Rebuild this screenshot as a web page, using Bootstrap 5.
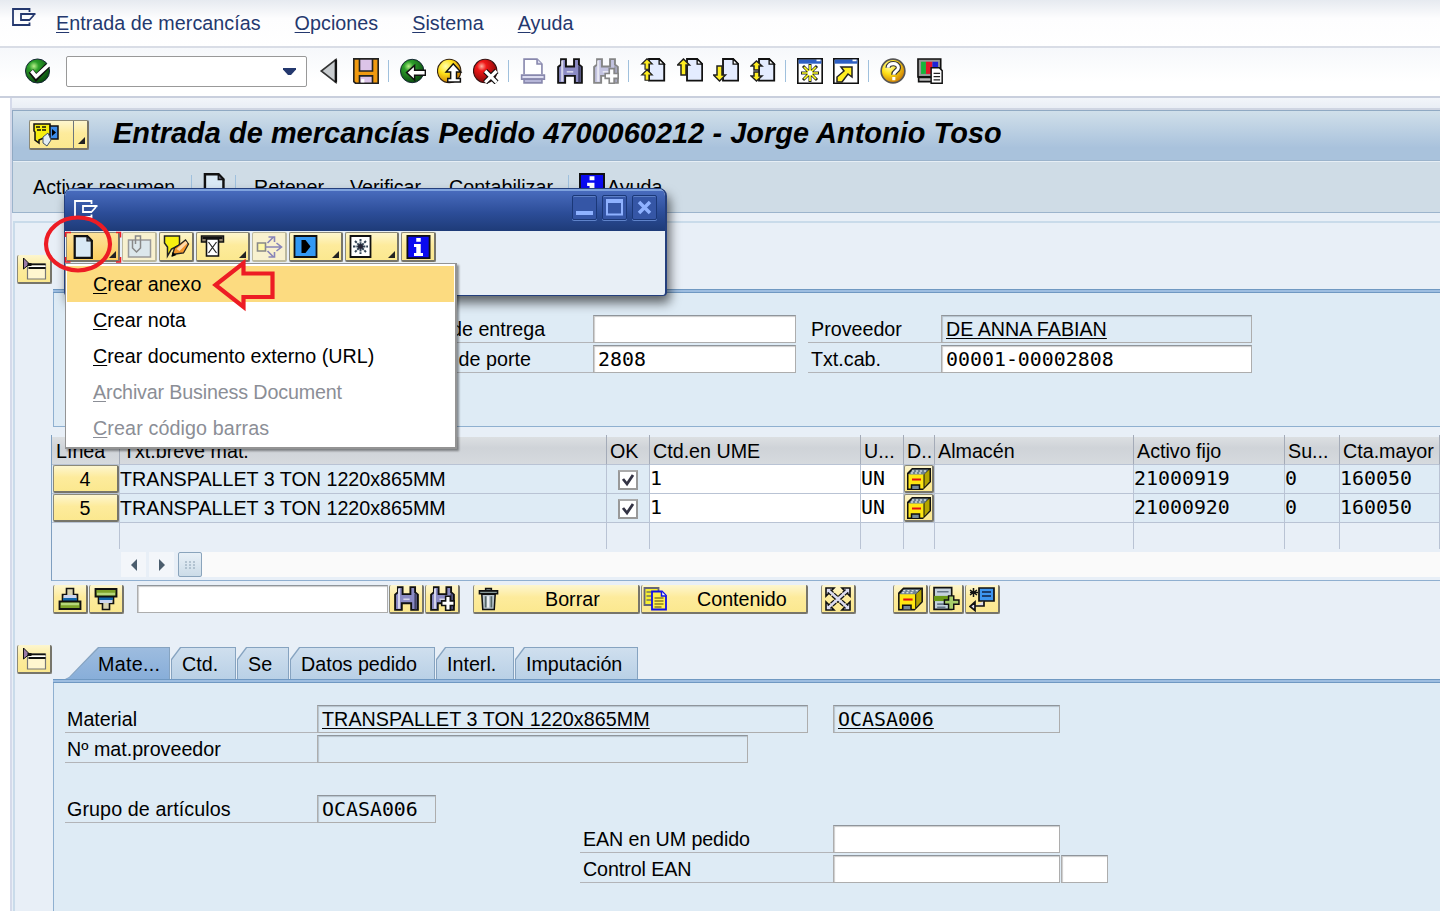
<!DOCTYPE html>
<html lang="es">
<head>
<meta charset="utf-8">
<title>Entrada de mercancías</title>
<meta name="viewport" content="width=device-width, initial-scale=1">
<link href="https://cdn.jsdelivr.net/npm/bootstrap@5.3.0/dist/css/bootstrap.min.css" rel="stylesheet">
<style>
body{font-family:"Liberation Sans",Arial,sans-serif;font-size:19.7px;line-height:28px;color:#000;background:#fff;width:1440px;height:911px;overflow:hidden;white-space:nowrap}
svg{display:block;flex:none}
.mono{font-family:"DejaVu Sans Mono","Liberation Mono",monospace;font-size:19.9px}
u{text-underline-offset:2px;text-decoration-thickness:1px;text-decoration-skip-ink:none}
/* menu and system toolbar */
.menubar{height:48px;padding:0 0 2px 12px;color:#24386e;background:linear-gradient(#e6eaf0,#fdfdfe 40%,#fff);border-bottom:2px solid #d9dde6}
.menubar svg{margin:8px 20px 0 0}
.menubar .nav{gap:34px;padding-top:9px;letter-spacing:.05px}
.systools{height:50px;padding:10px 0 0 25px;background:linear-gradient(#f6f8fb,#fff 70%);border-bottom:2px solid #c9cfdd}
.systools .cmd{width:241px;height:31px;margin:-2px 11px 0 15px;border:1px solid #999;border-radius:2px;background:#fff;padding:11px 10px}
.grp{gap:10.5px}
.tsep{width:1px;height:22px;background:#9fc0dd;margin:2px 11px 0 9px;flex:none}
/* work area */
.work{margin-left:10px;border-left:2px solid #d5daea;height:813px;background:#e8eff7}
.strip{height:12px;background:linear-gradient(#f2f5fa,#e9eef5);border-bottom:2px solid #cfd5e2}
.titleband{height:50px;border-top:1px solid #90a9c3;border-left:1px solid #90a9c3;background:linear-gradient(#d0dfea,#a9c2dc 75%,#a9c2dc);padding:9px 0 0 16px}
.titleband h1{font-size:28.9px;font-weight:700;font-style:italic;margin:-1px 0 0 24px;line-height:28px;letter-spacing:.05px}
.apptools{height:53px;background:#cfdce6;border:1px solid #9cb4cc;border-width:1px 0 1px 1px;border-top-color:#9cb4cc;box-shadow:inset 0 1px #e6eef5;padding:12px 0 0 20px}
.apptools .tsep{margin:2px 0 0}
.outer{margin:8px 0 0 1px;border:2px solid #c9dbea;border-width:2px 0 0 2px;height:700px}
.side{width:39px;padding-left:2px;flex:none}
.ybtn{background:linear-gradient(#fdf6cf,#fdeb9c 45%,#fbe88f);border:1px solid #8d8a78;border-right:2px solid #77756a;border-bottom:2px solid #77756a;border-radius:2px;flex:none;display:flex;align-items:center;justify-content:center;color:#000}
.ybtn.notop{border-top:0}
.arrowcorner{width:7px;height:7px;background:#222;clip-path:polygon(100% 0,100% 100%,0 100%)}
.pane{border-left:1px solid #8fb0d0;background:#deebf5}
.paneline{height:4px;background:#9dbde0;border-top:1px solid #6f98c2;border-bottom:1px solid #6f98c2}
.fld{height:28px;border:1px solid #adadad;border-top-color:#8f959b;background:#fff;line-height:27px;padding-left:4px;flex:none;box-shadow:inset 1px 1px 1px #ccc}
.fld.ro{background:#deebf5;border-color:#8f959b #adadad #adadad;box-shadow:inset 1px 1px 1px #b5c2cc}
.lbl{height:28px;border-bottom:1px solid #b2b4b8;padding-left:2px;flex:none}
/* item table */
.grid{border-left:1px solid #7f9fc0;border-bottom:1px solid #8fafd0;height:146px}
.grid table{table-layout:fixed;width:1388px;border-collapse:separate;border-spacing:0}
.grid th,.grid td{font-weight:400;padding:0;height:29px;border-right:1px solid #b9c3d4;border-bottom:1px solid #b9c3d4;overflow:hidden;line-height:28px}
.grid th{height:30px;background:linear-gradient(#e8eff7 2px,#dcdfe2 2px,#cfd3d8 45%,#d6dade);padding:3px 0 0 3px;line-height:26px;border-right-color:#a4abb8}
.grid th:first-child{padding-left:4px}
.grid tr.blank td{height:26px;border-bottom:0}
.t{background:#deebf5}.w{background:#fff}
.numb{width:66px;height:28px;margin-left:1px;padding-right:1px}
.chk{width:20px;height:20px;border:2px solid #999;border-top-color:#aaa;background:#fff;margin:1px auto 0 11px}
.sb{width:25px;height:25px;background:#f3f6fa;display:flex;align-items:center;justify-content:center}
.thumb{width:24px;height:25px;border:1px solid #8aa4bc;border-radius:2px;background:linear-gradient(#e8f0f7,#ccdce8)}
/* detail tabs */
.stab{height:32px;position:relative;background:#86a3c0;clip-path:polygon(0 12px,9px 0,100% 0,100% 100%,0 100%);padding:3px 0 0 11px;z-index:0;margin-right:1px}
.stab::before{content:"";position:absolute;z-index:-1;inset:1px 1px 0;background:linear-gradient(#cfdfee,#b9d0e6);clip-path:polygon(0 12px,9px 0,100% 0,100% 100%,0 100%)}
.stab.on,.stab.on::before{clip-path:polygon(0 100%,4px 94%,29px 4px,33px 0,100% 0,100% 100%)}
.stab.on::before{background:linear-gradient(#9dbcdf,#88aed9)}
/* floating dialog, menu and hand-drawn marks */
.dlg{position:absolute;left:64px;top:188px;width:603px;height:108px;background:#e8eff6;border:1px solid #243f7d;border-right-width:2px;border-radius:8px 8px 4px 4px;box-shadow:3px 7px 11px rgba(0,0,0,.58);overflow:hidden}
.dtitle{height:42px;border-top:2px solid #7ea2dd;background:linear-gradient(#486bbd,#2c4d98 55%,#1e3b78);padding:4px 8px 0 9px}
.dtitle svg.win{margin-top:5px}
.wb{width:25px;height:25px;border:1px solid #1b3878;border-radius:2px;background:#3556a6;box-shadow:0 1px #5f83ca,inset 0 1px #5d7fc6;display:flex;align-items:center;justify-content:center;margin-left:5px}
.dbtns{padding:1px 0 0 1px;gap:2px}
.dbtns .ybtn{height:30px}
.dbtns .ybtn.off{background:#f8f1cf;border-color:#bcb99f}
.drop{justify-content:space-between;align-items:center;width:54px;padding:0 2px 0 3px}
.drop .arrowcorner{align-self:flex-end;margin-bottom:2px}
.menu{position:absolute;left:65px;top:263px;width:392px;height:186px;background:#fff;border:1px solid #949494;border-right-width:2px;border-bottom-width:2px;padding:2px 1px;box-shadow:2px 2px 2px rgba(0,0,0,.4)}
.menu div{height:36px;line-height:36px;padding-left:26px}
.menu .off{color:#8b8e96}
.menu .hot{background:#fcdb80}
.marks{position:absolute;left:40px;top:210px}
</style>
</head>
<body>
<svg width="0" height="0" class="position-absolute">
<defs>
<radialGradient id="gg" cx=".35" cy=".3" r=".8"><stop offset="0" stop-color="#b9f08a"/><stop offset=".25" stop-color="#2da02a"/><stop offset="1" stop-color="#053d0a"/></radialGradient>
<radialGradient id="gy" cx=".35" cy=".3" r=".8"><stop offset="0" stop-color="#ffffb0"/><stop offset=".4" stop-color="#ffe11a"/><stop offset="1" stop-color="#c46a00"/></radialGradient>
<radialGradient id="gr" cx=".35" cy=".3" r=".8"><stop offset="0" stop-color="#ffb0a0"/><stop offset=".25" stop-color="#f01818"/><stop offset="1" stop-color="#6d0505"/></radialGradient>
<symbol id="win" viewBox="0 0 24 18"><path d="M17.5 4V1H1V17H17.5V14.500M23.500 6H9V12H17M22 7l-5 5.500" fill="none" stroke="currentColor" stroke-width="1.800"/></symbol>
<symbol id="ok" viewBox="0 0 16 16"><circle cx="7.7" cy="8" r="7.4" fill="url(#gg)" stroke="#123" stroke-width=".6"/><path d="M3.6 8l3.2 4L14 4.6" fill="none" stroke="#111" stroke-width="3.6"/><path d="M4 8l2.8 3.400L14.800 4" fill="none" stroke="#fff" stroke-width="2.200"/></symbol>
<symbol id="back" viewBox="0 0 16 16"><path d="M11 1v14L2 8z" fill="#c8cccf" stroke="#333" stroke-width="1"/><path d="M11 1v14" stroke="#111" stroke-width="1.5"/></symbol>
<symbol id="save" viewBox="0 0 16 16"><path d="M.5.5h15v15h-14l-1-1z" fill="#f09a10" stroke="#222"/><path d="M4 .5h8V8H4zM4 11h8v4.5H4z" fill="#dcc4e8" stroke="#222"/><path d="M5 13h2v2H5z" fill="#fff"/></symbol>
<symbol id="bk" viewBox="0 0 16 16"><circle cx="7.5" cy="8" r="7.2" fill="url(#gg)" stroke="#123" stroke-width=".6"/><path d="M4 9l5-4.400v3h6.600v3H9v3z" fill="#fff" stroke="#111" stroke-width=".9"/></symbol>
<symbol id="up" viewBox="0 0 16 16"><circle cx="7.5" cy="8" r="7.2" fill="url(#gy)" stroke="#321" stroke-width=".7"/><path d="M10 3.6l4.600 5H12v4h2.400v2.200H6.600v-2.200H8.400v-4H5.600z" fill="#fff" stroke="#111" stroke-width=".9"/></symbol>
<symbol id="no" viewBox="0 0 16 16"><circle cx="7.5" cy="8" r="7.2" fill="url(#gr)" stroke="#311" stroke-width=".7"/><path d="M7.500 8l7 7M14.500 8l-7 7" stroke="#111" stroke-width="3.400"/><path d="M7.500 8l7 7M14.500 8l-7 7" stroke="#fff" stroke-width="2"/></symbol>
<symbol id="print" viewBox="0 0 16 16"><path d="M2.500 10V.7h8l3 3V10" fill="#fff" stroke="#8888ad"/><path d="M10.500.7v3h3M1 10.500h14v2.500H1z" fill="#ddddf0" stroke="#8888ad"/><path d="M2.500 13h11v2.300h-11z" fill="#b6b6d8" stroke="#8888ad"/></symbol>
<symbol id="bin" viewBox="0 0 16 16"><path d="M2.500.7h3v4.500h5V.7h3V4l1.800 1.500v9.800h-4.300V11h-6v4.300H.7V5.500L2.500 4z" fill="#8b8bc4" stroke="#111" stroke-width="1.200"/><path d="M3.200 1.500v13" stroke="#d5d5ea" stroke-width="1.300"/><path d="M13.800 5v10" stroke="#444468" stroke-width="1.500"/><path d="M6 8.500h4" stroke="#d5d5ea" stroke-width="1"/></symbol>
<symbol id="plus" viewBox="0 0 16 16"><path d="M10 6.500h3v3h2.500v3H13v3h-3v-3H7.500v-3H10z" fill="#fff" stroke="#111" stroke-width="1"/></symbol>
<symbol id="page" viewBox="0 0 16 16"><path d="M.6.6h6l3 3v9.800h-9z" fill="#e4ecff" stroke="#111" stroke-width="1.100"/><path d="M6.600.6v3h3z" fill="#fff" stroke="#111" stroke-width=".8"/></symbol>
<symbol id="ya" viewBox="0 0 8 8"><path d="M4 .5L7.500 4H5.300v3.500H2.700V4H.5z" fill="#ffee22" stroke="#222" stroke-width=".8"/></symbol>
<symbol id="nw" viewBox="0 0 16 16"><path d="M.5.5h15v15H.5z" fill="#fff" stroke="#111"/><path d="M1 1h14v2.500H1z" fill="#2d5fc4"/><path d="M12 1.500h2.500" stroke="#fff"/></symbol>
<symbol id="help" viewBox="0 0 16 16"><circle cx="8" cy="8" r="7.300" fill="url(#gy)" stroke="#555" stroke-width="1"/><path d="M5 6C5 2.500 11.500 2.700 11.300 6 11.200 8 8.500 8 8.500 10.300" fill="none" stroke="#333" stroke-width="3.300"/><path d="M5 6C5 2.500 11.500 2.700 11.300 6 11.200 8 8.500 8 8.500 10.300M8.500 11.700v2" fill="none" stroke="#fff" stroke-width="1.900"/></symbol>
<symbol id="mon" viewBox="0 0 16 16"><path d="M.6.6h14v11H.6z" fill="#999" stroke="#111"/><path d="M2.500 2.300h3v7.500h-3z" fill="#15b53a"/><path d="M5.500 2.300h4v7.500h-4z" fill="#e4142a"/><path d="M9.500 2.300h3.500v7.500H9.500z" fill="#1c22d8"/><path d="M1 12h10v2.500H1z" fill="#bbb" stroke="#111"/><path d="M8.700 6h5l1.800 1.800v7.700H8.700z" fill="#fff" stroke="#111" stroke-width=".9"/><path d="M10.200 9.500h4M10.200 11.500h4M10.200 13.500h4" stroke="#222" stroke-width=".8"/></symbol>
<symbol id="doc" viewBox="0 0 16 16"><path d="M1.800.8h8.400l3 3v11.400H1.800z" fill="#d9e9f5" stroke="#111" stroke-width="1.500"/><path d="M10 .8v3.200h3.200z" fill="#667" stroke="#111" stroke-width=".8"/></symbol>
<symbol id="info" viewBox="0 0 16 16"><path d="M.6.600h14.800v14.800H.6z" fill="#0a0af0" stroke="#111" stroke-width="1.200"/><path d="M6.500 2h3v2.500h-3zM5 6h4.500v6H11v2H5v-2h1.500V8H5z" fill="#fff"/></symbol>
<symbol id="obj" viewBox="0 0 26 24"><path d="M1 1h16l1 10-5 3-7 3v3l-4-3V9L1 8z" fill="#f7ef10" stroke="#111" stroke-width="1.500"/><path d="M3 4h4M9 4h4M4 7h4M9 7h4" stroke="#111" stroke-width="1.600"/><path d="M17 3h8v13h-8z" fill="#3d8ce8" stroke="#111" stroke-width="1.500"/><path d="M19 6l4 3.500-4 3.500z"/><path d="M10 14l5-4 3 7-4 6-4-3z" fill="#e2edf5" stroke="#456" stroke-width="1"/></symbol>
<symbol id="tray" viewBox="0 0 24 24"><path d="M5 7h18v15H5z" fill="#fff6cf" stroke="#777" stroke-width="1.200"/><path d="M6 7.500h17M6 11h17" stroke="#111" stroke-width="1.800"/><path d="M7 8.500h16v1.500H7z" fill="#fff"/><path d="M1 1l6 6-6 5z" fill="#9a7aa5" stroke="#111" stroke-width="1"/><path d="M5 7.500h4" stroke="#111" stroke-width="3"/></symbol>
<symbol id="clip" viewBox="0 0 24 24"><path d="M1 5h22v17H1z" fill="#dce7ec" stroke="#999" stroke-width="1.500"/><path d="M5 5v8l4 4 4-4V1H8v8" fill="none" stroke="#888" stroke-width="1.500"/></symbol>
<symbol id="pencil" viewBox="0 0 26 24"><path d="M1 1h15v9l-8 4-4 7V12L1 8z" fill="#f7ef10" stroke="#222" stroke-width="1.500"/><path d="M9 20l2-7 6-4 5-4 3 4-5 9-8 1z" fill="#f3952b" stroke="#222" stroke-width="1.300"/><path d="M13 14l9-8 2 2-8 8z" fill="#ffd9a8"/><path d="M8 22l1-5 4 3z"/></symbol>
<symbol id="send" viewBox="0 0 24 24"><path d="M1 1h22v6H1z" fill="#8c806c" stroke="#111" stroke-width="1.500"/><path d="M6 4h12v17H6z" fill="#fff" stroke="#111" stroke-width="1.600"/><path d="M8 7l8 11M16 7L8 18" stroke="#222" stroke-width="1.200"/><path d="M2 3h20" stroke="#111" stroke-width="2"/></symbol>
<symbol id="links" viewBox="0 0 26 24"><path d="M1 8h8v8H1z" fill="#fff8a8" stroke="#888" stroke-width="1.600"/><path d="M9 12h15M20 8l5 4-5 4M11 8l6-6M12 2h6v5M11 16l6 6M12 22h6v-5" fill="none" stroke="#8885b8" stroke-width="1.600"/></symbol>
<symbol id="play" viewBox="0 0 24 24"><path d="M1 1h22v21H1z" fill="#3399f5" stroke="#111" stroke-width="1.800"/><path d="M8 5h4l5 6.500-5 6.500H8z"/></symbol>
<symbol id="spark" viewBox="0 0 24 24"><path d="M1.500 1h20v21h-20z" fill="#fff" stroke="#111" stroke-width="1.800"/><path d="M11.500 4v15M4 11.500h15M6 6l11 11M17 6L6 17" stroke="#345" stroke-width="2" stroke-dasharray="2.500 .8"/><circle cx="11.500" cy="11.500" r="2.500" fill="#223"/></symbol>
<symbol id="cab" viewBox="0 0 26 24"><path d="M1 6l5-5h19v14l-8 8H1z" fill="#111"/><path d="M2.500 7h15v14.500h-15z" fill="#ffe712"/><path d="M18.500 7l5-4.500v12l-5 5.500z" fill="#b4a500"/><path d="M3 7L6.500 2.500h16L18 7.500H3z" fill="#6d8292"/><path d="M6 4h14M5 6h12" stroke="#fff" stroke-width="1" stroke-dasharray="2 2"/><path d="M6 12.500h9" stroke="#e01010" stroke-width="2"/><path d="M5.500 22v-4h8v4" fill="#768a98" stroke="#111" stroke-width="1.500"/></symbol>
<symbol id="sup" viewBox="0 0 24 24"><path d="M8.500 1.500h7v6h4v7h-15v-7h4z" fill="#d8d3b0" stroke="#111" stroke-width="1.600"/><path d="M6 8h12v3H6z" fill="#ccd6f0"/><path d="M5 11h14v3H5z" fill="#1165a8"/><path d="M1.500 14.500h21v7.500h-21z" fill="#7fa42a" stroke="#111" stroke-width="1.800"/><path d="M3 17h18" stroke="#b5d77a" stroke-width="2.500"/></symbol>
<symbol id="trash" viewBox="0 0 22 24"><path d="M4 7h14l-1 16H5z" fill="#b9c5ce" stroke="#111" stroke-width="1.600"/><path d="M8 9v12M14 9v12" stroke="#566" stroke-width="1.800"/><path d="M10.500 9v12" stroke="#fff" stroke-width="1.500"/><path d="M1.500 3.500h19v3h-19zM8 1h6v2.500H8z" fill="#899" stroke="#111" stroke-width="1.600"/></symbol>
<symbol id="copy" viewBox="0 0 24 24"><path d="M1 1h14v17H1z" fill="#f7ef30" stroke="#667" stroke-width="1.800"/><path d="M3 5h5M3 9h5M3 13h5" stroke="#776" stroke-width="1.500"/><path d="M8.500 4.500h10l4 4v14h-14z" fill="#fff04a" stroke="#1010e8" stroke-width="1.800"/><path d="M18 4.500v4.500h4.500" fill="#fff" stroke="#1010e8" stroke-width="1.500"/><path d="M11 11h9M11 14h9M11 17h9M11 20h7" stroke="#8a7d20" stroke-width="1.500"/></symbol>
<symbol id="exp" viewBox="0 0 26 24"><path d="M1 1h8L1 9zM25 1v8l-8-8zM1 23v-8l8 8zM25 23h-8l8-8z" fill="#e2e2f2" stroke="#111" stroke-width="1.600"/><path d="M4 4l18 16M22 4L4 20" stroke="#111" stroke-width="5" stroke-dasharray="4.500 .8"/><path d="M3 3l20 18M23 3L3 21" stroke="#dcdcf2" stroke-width="2.400"/></symbol>
<symbol id="ins" viewBox="0 0 26 24"><path d="M1 1h17v21H1z" fill="#c4d2dd" stroke="#111" stroke-width="1.600"/><path d="M4 5h11M4 17h8M4 20h8" stroke="#678" stroke-width="1.600"/><path d="M1 9h16v5H1z" fill="#6a9a16"/><path d="M15 9h5v4h5v4h-5v5h-5v-5h-4v-4h4z" fill="#a8cf6a" stroke="#111" stroke-width="1.400"/></symbol>
<symbol id="asg" viewBox="0 0 26 24"><path d="M10 1h15v13H10z" fill="#3d95ef" stroke="#111" stroke-width="1.700"/><path d="M13 5h9M13 9h9" stroke="#124" stroke-width="1.500"/><path d="M1 3l7 5M1 8l7-5M4.500 1v9M1 5.500h8" stroke="#111" stroke-width="1.500"/><path d="M15 14v5H6v-4l-5 4.500L6 23.500v-4" fill="#dde" stroke="#111" stroke-width="1.700"/></symbol>
</defs>
</svg>

<header class="menubar d-flex">
  <svg width="24" height="18"><use href="#win"/></svg>
  <nav class="nav flex-nowrap"><span><u>E</u>ntrada de mercancías</span><span><u>O</u>pciones</span><span><u>S</u>istema</span><span><u>A</u>yuda</span></nav>
</header>

<div class="systools d-flex">
  <svg width="26" height="26"><use href="#ok"/></svg>
  <div class="cmd d-flex justify-content-end"><svg width="13" height="8"><path d="M0 0h13v1.500L8 7H5L0 1.500z" fill="#24386e"/></svg></div>
  <svg width="26" height="26"><use href="#back"/></svg>
  <svg width="26" height="26" style="margin-left:9px"><use href="#save"/></svg>
  <i class="tsep"></i>
  <div class="grp d-flex"><svg width="26" height="26"><use href="#bk"/></svg><svg width="26" height="26"><use href="#up"/></svg><svg width="26" height="26"><use href="#no"/></svg></div>
  <i class="tsep"></i>
  <div class="grp d-flex"><svg width="26" height="26"><use href="#print"/></svg><svg width="26" height="26"><use href="#bin"/></svg><svg width="26" height="26" opacity=".5"><use href="#bin"/><use href="#plus"/></svg></div>
  <i class="tsep"></i>
  <div class="grp d-flex">
    <svg width="26" height="26"><use href="#page" x="8" width="27" height="27"/><use href="#ya" x="-.5" y="0" width="15" height="12"/><use href="#ya" x="-.5" y="11" width="15" height="12"/></svg>
    <svg width="26" height="26"><use href="#page" x="9" width="27" height="27"/><path d="M6.500 1l6 6H9v10H4V7H.500z" fill="#fe2" stroke="#222" stroke-width="1.500"/></svg>
    <svg width="26" height="26"><use href="#page" x="9" width="27" height="27"/><path d="M6.500 23l6-6H9V8H4v9H.500z" fill="#fe2" stroke="#222" stroke-width="1.500"/></svg>
    <svg width="26" height="26"><use href="#page" x="8" width="27" height="27"/><path d="M6.500 3l5.500 5H9v4H4V8H1zM6.500 23l5.500-5H9v-4H4v4H1z" fill="#fe2" stroke="#222" stroke-width="1.500"/></svg>
  </div>
  <i class="tsep"></i>
  <div class="grp d-flex">
    <svg width="26" height="26"><use href="#nw"/><path d="M13 6v18M4 15h18M6 8l14 14M20 8L6 22" stroke="#222" stroke-width="3"/><path d="M13 7v16M5 15h16M7 9l12 12M19 9L7 21" stroke="#ff2" stroke-width="1.700"/><circle cx="13" cy="15" r="2.500" fill="#fff"/></svg>
    <svg width="26" height="26"><use href="#nw"/><path d="M4 24v-5l7-6-3-4h11v10l-4-3-6 8z" fill="#fe2" stroke="#222" stroke-width="1.500"/></svg>
  </div>
  <i class="tsep"></i>
  <div class="grp d-flex"><svg width="26" height="26"><use href="#help"/></svg><svg width="26" height="26"><use href="#mon"/></svg></div>
</div>

<main class="work">
  <div class="strip"></div>
  <div class="titleband d-flex">
    <div class="ybtn" style="width:60px;height:30px;justify-content:space-between;padding:0 2px 0 3px"><svg width="26" height="24"><use href="#obj"/></svg><div class="d-flex align-items-end h-100 border-start border-secondary pb-1" style="padding-left:4px"><i class="arrowcorner"></i></div></div>
    <h1>Entrada de mercancías Pedido 4700060212 - Jorge Antonio Toso</h1>
  </div>
  <div class="apptools d-flex">
    <span style="width:158px">Activar resumen</span><i class="tsep"></i>
    <svg width="26" height="26" style="margin:0 7px 0 10px"><use href="#doc"/></svg><i class="tsep"></i>
    <span style="margin-left:18px;width:96px">Retener</span><span style="width:99px">Verificar</span><span style="width:119px">Contabilizar</span><i class="tsep"></i>
    <svg width="26" height="26" style="margin:0 2px 0 10px"><use href="#info"/></svg><span>Ayuda</span>
  </div>

  <div class="outer">
    <section class="d-flex" style="height:212px;padding-top:32px">
      <div class="side"><div class="ybtn notop" style="width:35px;height:29px"><svg width="25" height="24"><use href="#tray"/></svg></div></div>
      <div class="flex-grow-1" style="padding-top:34px;height:172px;margin-left:-1px">
        <div class="paneline"></div>
        <div class="pane" style="height:134px;border-bottom:1px solid #8fb0d0;padding:22px 0 0 349px">
          <div class="d-flex"><span class="lbl" style="width:190px;padding-left:1px">Nota de entrega</span><span class="fld" style="width:203px"></span><span class="lbl" style="width:133px;margin-left:12px;padding-left:3px">Proveedor</span><span class="fld ro" style="width:311px"><u>DE ANNA FABIAN</u></span></div>
          <div class="d-flex" style="margin-top:2px"><span class="lbl" style="width:190px">Carta de porte</span><span class="fld mono" style="width:203px">2808</span><span class="lbl" style="width:133px;margin-left:12px;padding-left:3px">Txt.cab.</span><span class="fld mono" style="width:311px">00001-00002808</span></div>
        </div>
      </div>
    </section>

    <section class="grid" style="margin-left:36px">
      <table>
        <colgroup><col style="width:68px"><col style="width:487px"><col style="width:43px"><col style="width:211px"><col style="width:43px"><col style="width:31px"><col style="width:199px"><col style="width:151px"><col style="width:55px"><col></colgroup>
        <tr><th>Línea</th><th>Txt.breve mat.</th><th>OK</th><th>Ctd.en UME</th><th>U...</th><th>D..</th><th>Almacén</th><th>Activo fijo</th><th>Su...</th><th>Cta.mayor</th></tr>
        <tr><td class="t"><div class="ybtn numb">4</div></td><td class="t">TRANSPALLET 3 TON 1220x865MM</td><td class="t"><div class="chk"><svg width="16" height="16"><path d="M3 7l4 5 6-9" fill="none" stroke="#334" stroke-width="2.800"/></svg></div></td><td class="w mono">1</td><td class="w mono">UN</td><td><div class="ybtn" style="height:28px"><svg width="26" height="24"><use href="#cab"/></svg></div></td><td></td><td class="t mono">21000919</td><td class="t mono">0</td><td class="t mono">160050</td></tr>
        <tr><td class="t"><div class="ybtn numb">5</div></td><td class="t">TRANSPALLET 3 TON 1220x865MM</td><td class="t"><div class="chk"><svg width="16" height="16"><path d="M3 7l4 5 6-9" fill="none" stroke="#334" stroke-width="2.800"/></svg></div></td><td class="w mono">1</td><td class="w mono">UN</td><td><div class="ybtn" style="height:28px"><svg width="26" height="24"><use href="#cab"/></svg></div></td><td></td><td class="t mono">21000920</td><td class="t mono">0</td><td class="t mono">160050</td></tr>
        <tr class="blank"><td></td><td></td><td></td><td></td><td></td><td></td><td></td><td></td><td></td><td></td></tr>
      </table>
      <div class="d-flex" style="margin:3px 0 0 69px">
        <div class="sb"><svg width="8" height="14"><path d="M7 1v12L1 7z" fill="#4b5d6d"/></svg></div>
        <div class="sb" style="margin:0 4px 0 3px"><svg width="8" height="14"><path d="M1 1v12l6-6z" fill="#4b5d6d"/></svg></div>
        <div class="thumb d-flex align-items-center justify-content-center"><svg width="10" height="8"><path d="M0 1h10M0 4h10M0 7h10" stroke="#8aa0b2" stroke-dasharray="2 2"/></svg></div>
        <div class="flex-grow-1" style="background:#fafafa"></div>
      </div>
    </section>

    <div class="d-flex" style="margin:4px 0 0 38px;height:29px">
      <div class="ybtn notop" style="width:35px;margin-right:1px"><svg width="24" height="24"><use href="#sup"/></svg></div>
      <div class="ybtn notop" style="width:35px"><svg width="24" height="24"><g transform="matrix(1 0 0 -1 0 24)"><use href="#sup" width="24" height="24"/></g></svg></div>
      <div class="fld" style="width:251px;margin:0 1px 0 13px"></div>
      <div class="ybtn notop" style="width:35px;margin-right:1px"><svg width="25" height="25"><use href="#bin"/></svg></div>
      <div class="ybtn notop" style="width:35px"><svg width="25" height="25"><use href="#bin"/><use href="#plus"/></svg></div>
      <div class="ybtn notop justify-content-start" style="width:167px;margin-left:13px;padding-left:4px"><svg width="21" height="24"><use href="#trash"/></svg><span style="margin-left:46px">Borrar</span></div>
      <div class="ybtn notop justify-content-start" style="width:167px;margin-left:1px;padding-left:1px"><svg width="25" height="24"><use href="#copy"/></svg><span style="margin-left:29px">Contenido</span></div>
      <div class="ybtn notop" style="width:35px;margin:0 37px 0 13px"><svg width="26" height="26"><use href="#exp"/></svg></div>
      <div class="ybtn notop" style="width:35px;margin-right:1px"><svg width="27" height="26"><use href="#cab"/></svg></div>
      <div class="ybtn notop" style="width:35px;margin-right:1px"><svg width="27" height="26"><use href="#ins"/></svg></div>
      <div class="ybtn notop" style="width:35px"><svg width="26" height="26"><use href="#asg"/></svg></div>
    </div>

    <section class="d-flex" style="padding-top:31px">
      <div class="side"><div class="ybtn notop" style="width:35px;height:29px"><svg width="25" height="24"><use href="#tray"/></svg></div></div>
      <div class="flex-grow-1" style="padding-top:2px;margin-left:-1px">
        <div class="d-flex" style="margin-left:12px">
          <div class="stab on" style="width:105px;padding-left:33px;letter-spacing:.3px">Mate...</div><div class="stab" style="width:65px">Ctd.</div><div class="stab" style="width:52px">Se</div><div class="stab" style="width:145px">Datos pedido</div><div class="stab" style="width:78px">Interl.</div><div class="stab" style="width:123px">Imputación</div>
        </div>
        <div class="paneline"></div>
        <div class="pane" style="height:240px;padding:22px 0 0 11px">
          <div class="d-flex"><span class="lbl" style="width:252px">Material</span><span class="fld ro" style="width:491px;letter-spacing:.07px"><u>TRANSPALLET 3 TON 1220x865MM</u></span><span class="fld ro mono" style="width:227px;margin-left:25px"><u>OCASA006</u></span></div>
          <div class="d-flex" style="margin-top:2px"><span class="lbl" style="width:252px">Nº mat.proveedor</span><span class="fld ro" style="width:431px"></span></div>
          <div class="d-flex" style="margin-top:32px"><span class="lbl" style="width:252px;letter-spacing:.1px">Grupo de artículos</span><span class="fld ro mono" style="width:119px">OCASA006</span></div>
          <div class="d-flex" style="margin:2px 0 0 515px"><span class="lbl" style="width:253px;padding-left:3px;letter-spacing:-.1px">EAN en UM pedido</span><span class="fld" style="width:227px"></span></div>
          <div class="d-flex" style="margin:2px 0 0 515px"><span class="lbl" style="width:253px;padding-left:3px;letter-spacing:-.1px">Control EAN</span><span class="fld" style="width:227px"></span><span class="fld" style="width:47px;margin-left:1px"></span></div>
        </div>
      </div>
    </section>
  </div>
</main>

<div class="dlg">
  <div class="dtitle d-flex text-white">
    <svg class="win me-auto" width="24" height="18"><use href="#win"/></svg>
    <div class="wb"><svg width="17" height="17"><path d="M0 12h17v4H0z" fill="#8fb2ff"/></svg></div>
    <div class="wb"><svg width="17" height="17"><path d="M1 3h15v12.500H1z" fill="none" stroke="#8fb2ff" stroke-width="2"/><path d="M0 0h17v4H0z" fill="#8fb2ff"/></svg></div>
    <div class="wb"><svg width="17" height="17"><path d="M3 3l11 11M14 3L3 14" stroke="#8fb2ff" stroke-width="3.500"/></svg></div>
  </div>
  <div class="dbtns d-flex">
    <div class="ybtn drop" style="background:linear-gradient(#fde19a,#fccf60);padding-left:5px"><svg width="24" height="24"><use href="#doc"/></svg><i class="arrowcorner"></i></div>
    <div class="ybtn off" style="width:35px"><svg width="25" height="24"><use href="#clip"/></svg></div>
    <div class="ybtn" style="width:35px"><svg width="27" height="24"><use href="#pencil"/></svg></div>
    <div class="ybtn drop"><svg width="25" height="24"><use href="#send"/></svg><i class="arrowcorner"></i></div>
    <div class="ybtn off" style="width:35px"><svg width="27" height="24"><use href="#links"/></svg></div>
    <div class="ybtn drop"><svg width="25" height="24"><use href="#play"/></svg><i class="arrowcorner"></i></div>
    <div class="ybtn drop"><svg width="24" height="24"><use href="#spark"/></svg><i class="arrowcorner"></i></div>
    <div class="ybtn" style="width:35px"><svg width="25" height="24"><use href="#info"/></svg></div>
  </div>
</div>
<div class="menu">
  <div class="hot"><u>C</u>rear anexo</div><div><u>C</u>rear nota</div><div><u>C</u>rear documento externo (URL)</div><div class="off" style="letter-spacing:-.15px"><u>A</u>rchivar Business Document</div><div class="off" style="letter-spacing:.12px"><u>C</u>rear código barras</div>
</div>
<svg class="marks" width="240" height="105" fill="none" stroke="#ed1c24">
  <path d="M26 22.500h5M25.500 22v5M76 22.500h4.500v5M25.500 47v5h5M80.500 47v5H76" stroke-width="1.500"/>
  <ellipse cx="38" cy="34" rx="32" ry="26.500" stroke-width="4.200"/>
  <path d="M175.500 75l28-22v10.500h29v23.500h-29V97z" stroke-width="4.200"/>
</svg>
</body>
</html>
